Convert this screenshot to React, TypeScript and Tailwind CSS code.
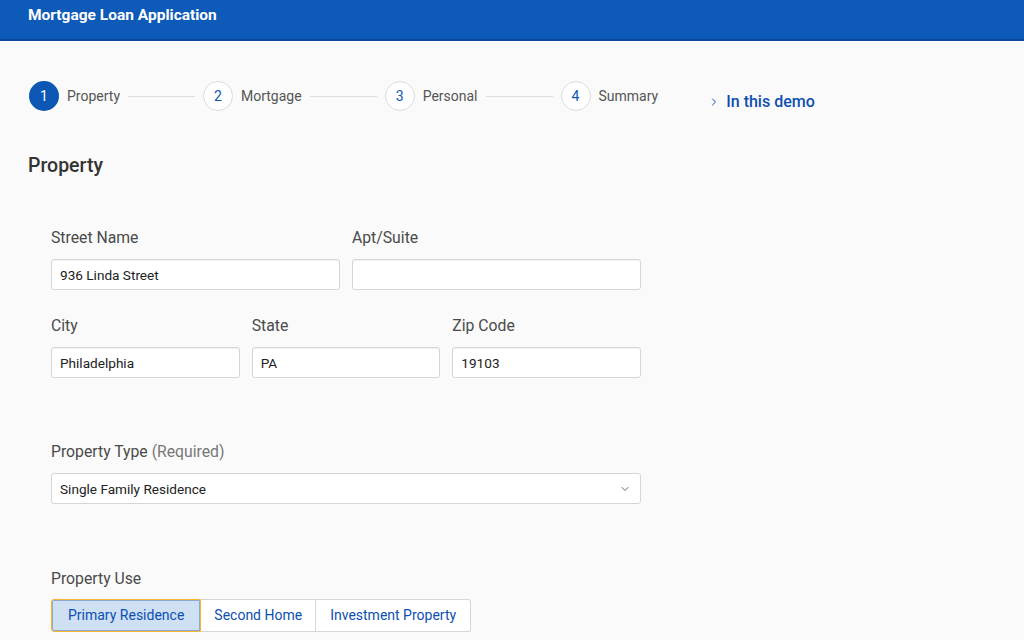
import { ChevronDown, ChevronRight } from "lucide-react";

const steps = ["Property", "Mortgage", "Personal", "Summary"];

function Stepper() {
  return (
    <div className="flex h-[30px] items-start">
      <div className="flex items-center">
        {steps.map((s, i) => (
          <div key={s} className="flex items-center">
            <div
              className={
                i === 0
                  ? "grid h-[30px] w-[30px] place-items-center rounded-full bg-[#0d57b4] text-[14px] text-white"
                  : "grid h-[30px] w-[30px] place-items-center rounded-full border border-[#dcdcdc] bg-white text-[14px] text-[#0d57b4]"
              }
            >
              {i + 1}
            </div>
            <span className="ml-2 text-[14px] text-[#555]">{s}</span>
            {i < steps.length - 1 ? <div className="mx-[8px] h-px w-[67px] bg-[#dedede]" /> : null}
          </div>
        ))}
      </div>
      <div className="ml-[50px] mt-[11px] flex h-[19px] items-center gap-[6px] text-[#0d4fb0]">
        <ChevronRight className="h-3 w-3" strokeWidth={2} />
        <span className="text-[16px] font-medium leading-[19px]">In this demo</span>
      </div>
    </div>
  );
}

function Field({ label, value }: { label: string; value?: string }) {
  return (
    <div className="flex flex-col">
      <label className="text-[15.75px] leading-[20px] text-[#4a4a4a]">{label}</label>
      <div className="mt-[11px] flex h-[31px] items-center rounded-[3px] border border-[#d6d6d6] bg-white px-2 text-[13.6px] text-[#222] shadow-[inset_0_1px_1px_rgba(0,0,0,0.06)]">
        {value}
      </div>
    </div>
  );
}

export default function App() {
  return (
    <div className="min-h-[640px] bg-[#fafafa] font-['Roboto',sans-serif]">
      <header className="flex h-[41px] items-start border-b-2 border-[#0a48a0] bg-[#0e5ab8] px-[28px] pt-[4px]">
        <h1 className="text-[15.5px] font-bold text-white">Mortgage Loan Application</h1>
      </header>

      <div className="px-[29px] pt-[40px]">
        <Stepper />
        <h2 className="mt-[40px] -ml-px text-[19.5px] font-medium text-[#333]">Property</h2>

        <div className="ml-[22px] mt-[48px] w-[590px]">
          <div className="grid grid-cols-2 gap-x-[12px]">
            <Field label="Street Name" value="936 Linda Street" />
            <Field label="Apt/Suite" />
          </div>
          <div className="mt-[26px] grid grid-cols-3 gap-x-[12px]">
            <Field label="City" value="Philadelphia" />
            <Field label="State" value="PA" />
            <Field label="Zip Code" value="19103" />
          </div>

          <div className="mt-[64px] flex flex-col">
            <label className="text-[15.75px] leading-[20px] text-[#4a4a4a]">
              Property Type <span className="text-[#777]">(Required)</span>
            </label>
            <div className="mt-[11px] flex h-[31px] items-center justify-between rounded-[3px] border border-[#d6d6d6] bg-white pl-2 pr-[9px] text-[13.6px] text-[#222]">
              Single Family Residence
              <ChevronDown className="h-3 w-3 text-[#666]" strokeWidth={2} />
            </div>
          </div>

          <div className="mt-[65px] flex flex-col">
            <label className="text-[15.75px] leading-[20px] text-[#4a4a4a]">Property Use</label>
            <div className="mt-[10px] flex h-[33px] w-fit text-[14px] text-[#0d4fb0]">
              <button className="rounded-l-[3px] border border-[#f5b52f] bg-[#cfe0f3] px-[16px] shadow-[inset_0_0_0_1px_#8fa9cf]">
                Primary Residence
              </button>
              <button className="border-y border-r border-[#d6d6d6] bg-white px-[13px]">Second Home</button>
              <button className="rounded-r-[3px] border-y border-r border-[#d6d6d6] bg-white px-[14px]">
                Investment Property
              </button>
            </div>
          </div>
        </div>
      </div>
    </div>
  );
}
